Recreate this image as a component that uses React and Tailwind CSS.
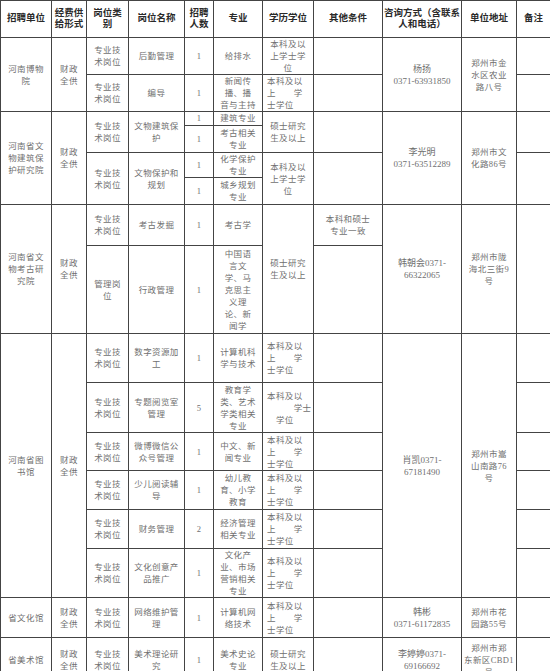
const colClass = [
  'w-[51px]', 'w-[35px]', 'w-[42px]', 'w-[56px]', 'w-[29px]', 'w-[49px]',
  'w-[51px]', 'w-[69px]', 'w-[79px]', 'w-[55px]', 'w-[34px]',
]

function Lines({ text }) {
  if (!text) return null
  return text.split('|').map((p, i) => (
    <span key={i} className="block whitespace-pre">
      {p}
    </span>
  ))
}

function C({ t, rs, left, className = '' }) {
  return (
    <td
      rowSpan={rs}
      className={`border border-[#444] p-0 align-middle ${left ? 'text-left pl-[4px]' : 'text-center'} ${className}`}
    >
      <Lines text={t} />
    </td>
  )
}

function H({ t }) {
  return (
    <th className="border border-[#444] p-0 align-middle text-center font-semibold text-[9.5px] leading-[11.5px] text-[#2a2a2a] tracking-normal">
      <Lines text={t} />
    </th>
  )
}

const BK = '本科及以|上　　学|士学位'

export default function App() {
  return (
    <div className="w-[550px] h-[671px] overflow-hidden bg-white font-['Liberation_Serif','Noto_Sans_CJK_SC',serif]">
      <table className="w-[550px] table-fixed border-collapse text-[8.5px] leading-[12px] tracking-[0.4px] text-[#707070]">
        <colgroup>
          {colClass.map((c, i) => (
            <col key={i} className={c} />
          ))}
        </colgroup>
        <thead>
          <tr className="h-[37px]">
            <H t="招聘单位" />
            <H t="经费供|给形式" />
            <H t="岗位类|别" />
            <H t="岗位名称" />
            <H t="招聘|人数" />
            <H t="专业" />
            <H t="学历学位" />
            <H t="其他条件" />
            <H t="咨询方式（含联系|人和电话）" />
            <H t="单位地址" />
            <H t="备注" />
          </tr>
        </thead>
        <tbody>
          {/* 河南博物院 */}
          <tr className="h-[37px]">
            <C t="河南博物|院" rs={2} />
            <C t="财政|全供" rs={2} />
            <C t="专业技|术岗位" />
            <C t="后勤管理" />
            <C t="1" />
            <C t="给排水" />
            <C t="本科及以|上学士学|位" />
            <C />
            <C t="杨扬|0371-63931850" rs={2} className="tracking-normal text-[9px]" />
            <C t="郑州市金|水区农业|路八号" rs={2} />
            <C />
          </tr>
          <tr className="h-[37px]">
            <C t="专业技|术岗位" />
            <C t="编导" />
            <C t="1" />
            <C t="新闻传|播、播|音与主持" />
            <C t={BK} left />
            <C />
            <C />
          </tr>

          {/* 河南省文物建筑保护研究院 */}
          <tr className="h-[14px]">
            <C t="河南省文|物建筑保|护研究院" rs={4} />
            <C t="财政|全供" rs={4} />
            <C t="专业技|术岗位" rs={2} />
            <C t="文物建筑保|护" rs={2} />
            <C t="1" className="leading-[11px]" />
            <C t="建筑专业" className="leading-[11px]" />
            <C t="硕士研究|生及以上" rs={2} />
            <C rs={2} />
            <C t="李光明|0371-63512289" rs={4} className="tracking-normal text-[9px]" />
            <C t="郑州市文|化路86号" rs={4} />
            <C rs={2} />
          </tr>
          <tr className="h-[27px]">
            <C t="1" />
            <C t="考古相关|专业" />
          </tr>
          <tr className="h-[25px]">
            <C t="专业技|术岗位" rs={2} />
            <C t="文物保护和|规划" rs={2} />
            <C t="1" />
            <C t="化学保护|专业" />
            <C t="本科及以|上学士学|位" rs={2} />
            <C rs={2} />
            <C rs={2} />
          </tr>
          <tr className="h-[27px]">
            <C t="1" />
            <C t="城乡规划|专业" />
          </tr>

          {/* 河南省文物考古研究院 */}
          <tr className="h-[41px]">
            <C t="河南省文|物考古研|究院" rs={2} />
            <C t="财政|全供" rs={2} />
            <C t="专业技|术岗位" />
            <C t="考古发掘" />
            <C t="1" />
            <C t="考古学" />
            <C t="硕士研究|生及以上" rs={2} />
            <C t="本科和硕士|专业一致" />
            <C t="韩朝会0371-|66322065" rs={2} className="tracking-normal text-[9px]" />
            <C t="郑州市陇|海北三街9|号" rs={2} />
            <C rs={2} />
          </tr>
          <tr className="h-[88px]">
            <C t="管理岗|位" />
            <C t="行政管理" />
            <C t="1" />
            <C t="中国语|言文|学、马|克思主|义理|论、新|闻学" />
            <C />
          </tr>

          {/* 河南省图书馆 */}
          <tr className="h-[49px]">
            <C t="河南省图|书馆" rs={6} />
            <C t="财政|全供" rs={6} />
            <C t="专业技|术岗位" />
            <C t="数字资源加|工" />
            <C t="1" />
            <C t="计算机科|学与技术" />
            <C t={BK} left />
            <C />
            <C t="肖凯0371-|67181490" rs={6} className="tracking-normal text-[9px]" />
            <C t="郑州市嵩|山南路76|号" rs={6} />
            <C />
          </tr>
          <tr className="h-[50px]">
            <C t="专业技|术岗位" />
            <C t="专题阅览室|管理" />
            <C t="5" />
            <C t="教育学|类、艺术|学类相关|专业" />
            <C t="本科及以|　　　学士|　学位" left />
            <C />
            <C />
          </tr>
          <tr className="h-[38px]">
            <C t="专业技|术岗位" />
            <C t="微博微信公|众号管理" />
            <C t="1" />
            <C t="中文、新|闻专业" />
            <C t={BK} left />
            <C />
            <C />
          </tr>
          <tr className="h-[39px]">
            <C t="专业技|术岗位" />
            <C t="少儿阅读辅|导" />
            <C t="1" />
            <C t="幼儿教|育、小学|教育" />
            <C t={BK} left />
            <C />
            <C />
          </tr>
          <tr className="h-[39px]">
            <C t="专业技|术岗位" />
            <C t="财务管理" />
            <C t="2" />
            <C t="经济管理|相关专业" />
            <C t={BK} left />
            <C />
            <C />
          </tr>
          <tr className="h-[49px]">
            <C t="专业技|术岗位" />
            <C t="文化创意产|品推广" />
            <C t="1" />
            <C t="文化产|业、市场|营销相关|专业" />
            <C t={BK} left />
            <C />
            <C />
          </tr>

          {/* 省文化馆 */}
          <tr className="h-[40px]">
            <C t="省文化馆" />
            <C t="财政|全供" />
            <C t="专业技|术岗位" />
            <C t="网络维护管|理" />
            <C t="1" />
            <C t="计算机网|络技术" />
            <C t={BK} left />
            <C />
            <C t="韩彬|0371-61172835" className="tracking-normal text-[9px]" />
            <C t="郑州市花|园路55号" />
            <C />
          </tr>

          {/* 省美术馆 */}
          <tr className="h-[44px]">
            <C t="省美术馆" />
            <C t="财政|全供" />
            <C t="专业技|术岗位" />
            <C t="美术理论研|究" />
            <C t="1" />
            <C t="美术史论|专业" />
            <C t="硕士研究|生及以上" />
            <C />
            <C t="李婷婷0371-|69166692" className="tracking-normal text-[9px]" />
            <C t="郑州市郑|东新区CBD1|号" />
            <C />
          </tr>
        </tbody>
      </table>
    </div>
  )
}
